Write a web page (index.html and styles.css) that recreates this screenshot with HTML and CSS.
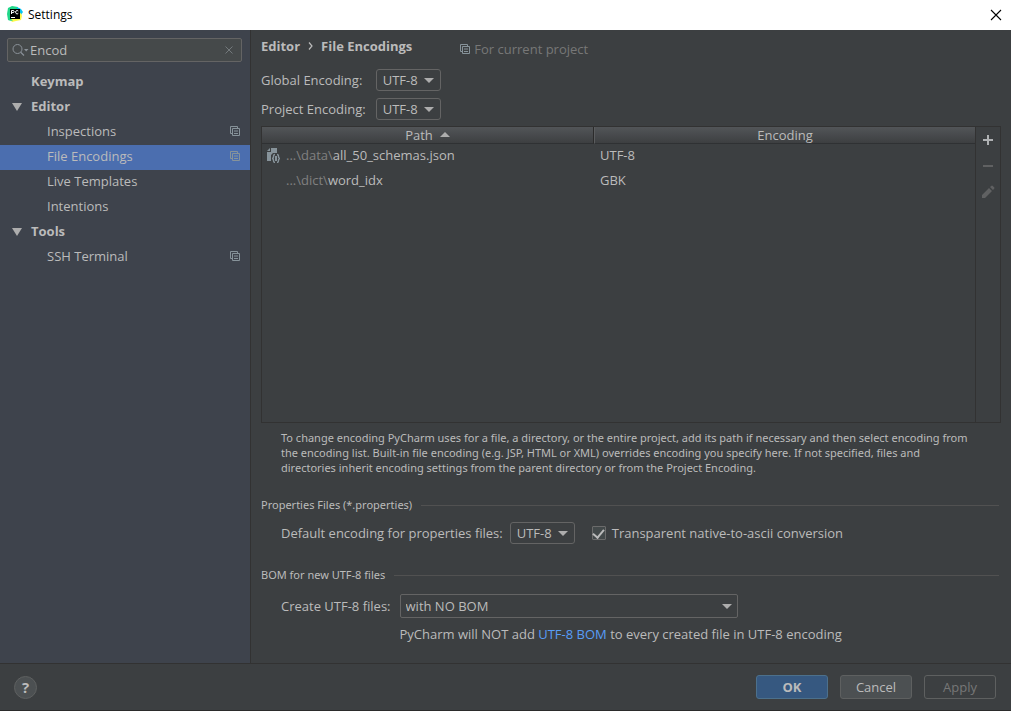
FILE: index.html
```html
<!DOCTYPE html>
<html lang="en">
<head>
<meta charset="utf-8">
<title>Settings</title>
<link rel="stylesheet" href="styles.css">
</head>
<body>
<svg class="defs" width="0" height="0" aria-hidden="true">
  <symbol id="copy" viewBox="0 0 10 10">
    <path d="M2.500 7.500H.5V.5H7.500V2.500M2.500 2.500H9.500V9.500H2.500ZM4 5H8M4 7.500H8" fill="none" stroke="currentColor"/>
  </symbol>
</svg>
<div class="window">
  <header class="titlebar">
    <svg class="logo" width="16" height="16" viewBox="0 0 16 16" aria-hidden="true">
      <path d="M1 2 5 0 11 1 9 9 6 15 1 14 0 8Z" fill="#21d789"/>
      <path d="M10 1 14 3 16 6 14 9 10 6Z" fill="#07c3f2"/>
      <path d="M14 7 15 10 14 14 9 15 5 16 3 13Z" fill="#fcf84a"/>
      <path d="M1 11 4 13 6 15 1 14Z" fill="#21d789"/>
      <rect x="3" y="3" width="10" height="10" fill="#000"/>
      <path d="M4.500 8V4.500H6Q7.200 4.500 7.200 5.500T6 6.600H4.500M11.300 5Q10 4 9 5T9 7.400 11.300 7.300M4 11.500H8" fill="none" stroke="#fff"/>
    </svg>
    <h1 class="title">Settings</h1>
    <button class="close" type="button" aria-label="Close">
      <svg width="12" height="12" viewBox="0 0 12 12"><path d="M1 1 11 11M11 1 1 11" stroke="#000" stroke-width="1.100"/></svg>
    </button>
  </header>

  <div class="content">
    <nav class="sidebar" aria-label="Settings sections">
      <div class="search">
        <svg width="17" height="14" viewBox="0 0 17 14" aria-hidden="true"><circle cx="5.500" cy="6" r="4.500" fill="none" stroke="#8b9299"/><path d="M8.700 9.300 12 12.500" stroke="#8b9299" stroke-width="1.200"/><path d="M12 6H16.500L14.200 8.500Z" fill="#8b9299"/></svg>
        <input class="search-input" type="text" value="Encod" aria-label="Search settings">
        <button class="clear" type="button" aria-label="Clear search"><svg width="8" height="8" viewBox="0 0 8 8"><path d="M.5 .5 7.500 7.500M7.500 .5 .5 7.500" stroke="#73797c"/></svg></button>
      </div>
      <ul class="tree">
        <li><a class="item group" href="#">Keymap</a></li>
        <li><a class="item group" href="#"><span class="arrow"></span>Editor</a></li>
        <li><a class="item child" href="#">Inspections<svg class="copy"><use href="#copy"/></svg></a></li>
        <li><a class="item child selected" href="#" aria-current="page">File Encodings<svg class="copy"><use href="#copy"/></svg></a></li>
        <li><a class="item child" href="#">Live Templates</a></li>
        <li><a class="item child" href="#">Intentions</a></li>
        <li><a class="item group" href="#"><span class="arrow"></span>Tools</a></li>
        <li><a class="item child" href="#">SSH Terminal<svg class="copy"><use href="#copy"/></svg></a></li>
      </ul>
    </nav>

    <main class="panel">
      <div class="heading">
        <h2 class="crumbs"><span>Editor</span><svg width="5" height="8" viewBox="0 0 5 8" aria-hidden="true"><path d="M1 .5 4 4 1 7.500" fill="none" stroke="#bbb" stroke-width="1.200"/></svg><span>File Encodings</span></h2>
        <span class="scope"><svg class="copy"><use href="#copy"/></svg>For current project</span>
      </div>
      <div class="encodings">
        <label for="global">Global Encoding:</label>
        <span class="combo"><select id="global"><option>UTF-8</option></select></span>
        <label for="project">Project Encoding:</label>
        <span class="combo"><select id="project"><option>UTF-8</option></select></span>
      </div>

      <div class="files">
        <div class="files-list">
          <table class="table">
            <thead>
              <tr><th class="col-path">Path<span class="sort"></span></th><th>Encoding</th></tr>
            </thead>
            <tbody>
              <tr>
                <td><div class="path"><svg width="14" height="16" viewBox="0 0 14 16" aria-hidden="true"><path d="M4 1H10V6H6L4 8V14H0V5H4Z" fill="#87939a"/><path d="M0 4 3 1V4Z" fill="#87939a"/><path d="M8 7.500Q6.500 7.500 6.500 9.500T5 11.500Q6.500 11.500 6.500 13.500T8 15.500M10 7.500Q11.500 7.500 11.500 9.500T13 11.500Q11.500 11.500 11.500 13.500T10 15.500" fill="none" stroke="#87939a" stroke-width="1.400"/><path d="M9 9V14" stroke="#87939a" stroke-width="2"/></svg><span><span class="dim">...\data\</span>all_50_schemas.json</span></div></td>
                <td>UTF-8</td>
              </tr>
              <tr>
                <td><div class="path no-icon"><span><span class="dim">...\dict\</span>word_idx</span></div></td>
                <td>GBK</td>
              </tr>
            </tbody>
          </table>
        </div>
        <div class="tools">
          <button class="tool" type="button" aria-label="Add"><svg width="12" height="12" viewBox="0 0 12 12"><path d="M1 6H11M6 1V11" stroke="#afb1b3" stroke-width="2"/></svg></button>
          <button class="tool" type="button" aria-label="Remove" disabled><svg width="12" height="12" viewBox="0 0 12 12"><path d="M1 6H11" stroke="#606162" stroke-width="2"/></svg></button>
          <button class="tool" type="button" aria-label="Edit" disabled><svg width="14" height="14" viewBox="0 0 14 14"><path d="M1 10 8 3 11 6 4 13H1ZM9 2 10.500 .7Q11 .3 11.500 .7L13.300 2.500Q13.700 3 13.300 3.500L12 5Z" fill="#606162"/></svg></button>
        </div>
      </div>
      <p class="note">To change encoding PyCharm uses for a file, a directory, or the entire project, add its path if necessary and then select encoding from the encoding list. Built-in file encoding (e.g. JSP, HTML or XML) overrides encoding you specify here. If not specified, files and directories inherit encoding settings from the parent directory or from the Project Encoding.</p>

      <h3 class="section">Properties Files (*.properties)</h3>
      <div class="row properties">
        <label for="props">Default encoding for properties files:</label>
        <span class="combo"><select id="props"><option>UTF-8</option></select></span>
        <label class="check"><input type="checkbox" checked>Transparent native-to-ascii conversion</label>
      </div>

      <h3 class="section">BOM for new UTF-8 files</h3>
      <div class="row bom">
        <label for="bom">Create UTF-8 files:</label>
        <span class="combo wide"><select id="bom"><option>with NO BOM</option></select></span>
        <p class="hint">PyCharm will NOT add <a class="link" href="#">UTF-8 BOM</a> to every created file in UTF-8 encoding</p>
      </div>
    </main>
  </div>

  <footer class="footer">
    <button class="help" type="button" aria-label="Help">?</button>
    <div class="actions">
      <button class="btn primary" type="button">OK</button>
      <button class="btn" type="button">Cancel</button>
      <button class="btn" type="button" disabled>Apply</button>
    </div>
  </footer>
</div>
</body>
</html>
```
FILE: styles.css
```css
* { box-sizing: border-box; }
body {
  margin: 0;
  background: #3c3f41;
  color: #bbbbbb;
  font: 13px/18px "Open Sans", "Noto Sans", sans-serif;
}
h1, h2, h3, p, ul { margin: 0; padding: 0; }
button, input, select { font: inherit; color: inherit; margin: 0; }
button { padding: 0; border: 0; background: none; }
a { color: inherit; text-decoration: none; }
svg { flex: none; }
.defs { position: absolute; }
.window { display: flex; flex-direction: column; min-height: 100vh; border-bottom: 1px solid #2b2b2b; }

.titlebar { display: flex; align-items: center; gap: 5px; height: 30px; padding: 0 9px 0 7px; background: #fff; color: #000; }
.logo { margin-bottom: 2px; }
.title { flex: 1; font-size: 12px; font-weight: 400; }
.close { display: grid; }

.content { display: flex; flex: 1; }
.sidebar { width: 251px; flex: none; padding-top: 8px; background: #3e434c; border-right: 1px solid #323232; }
.search { display: flex; align-items: center; gap: 1px; height: 24px; margin: 0 8px 8px 7px; padding: 0 8px 0 4px; background: #45494a; border: 1px solid #646464; border-radius: 2px; }
.search-input { flex: 1; min-width: 0; padding: 0; border: 0; outline: 0; background: none; }
.clear { display: grid; }
.tree { list-style: none; }
.item { display: flex; align-items: center; height: 25px; padding: 0 10px 3px 0; }
.item.group { position: relative; padding-left: 31px; font-weight: 700; }
.item.child { padding-left: 47px; }
.selected { background: #4b6eaf; }
.arrow { position: absolute; left: 12px; top: 8px; border: 5px solid transparent; border-top: 8px solid #adadad; border-bottom: 0; }
.copy { width: 10px; height: 10px; color: #87939a; }
.item .copy { margin-left: auto; }

.panel { display: flex; flex-direction: column; flex: 1; min-width: 0; padding: 7px 10px 20px; }
.heading { display: flex; gap: 48px; height: 32px; }
.crumbs { display: flex; align-items: center; gap: 8px; height: 18px; font-size: 13px; line-height: 18px; }
.scope { display: flex; align-items: center; gap: 4px; height: 24px; color: #777777; }
.encodings { display: grid; grid-template-columns: max-content max-content; align-items: center; gap: 7px 10px; margin-bottom: 6px; }
.combo { position: relative; display: inline-flex; width: 65px; }
.combo::after { content: ""; position: absolute; right: 7px; top: 9px; border: 5px solid transparent; border-top-color: #adadad; border-bottom: 0; pointer-events: none; }
.combo select { appearance: none; width: 100%; height: 22px; padding: 0 6px; border: 1px solid #646464; border-radius: 3px; background: #3c3f41; }
.combo.wide { width: 338px; }
.combo.wide select { height: 24px; padding: 0 5px; border-radius: 2px; }
.combo.wide::after { top: 10px; right: 6px; }

.files { display: flex; flex: 1; border: 1px solid #323232; }
.files-list { flex: 1; }
.table { width: 100%; border-collapse: separate; border-spacing: 0; table-layout: fixed; }
.table th { height: 17px; padding: 0; font-weight: 400; line-height: 16px; background: linear-gradient(#525558, #3d3f41); border-bottom: 1px solid #2f3133; }
.table .col-path { width: 332px; border-right: 1px solid #2b2b2b; }
.table th + th { border-left: 1px solid #5b5d5f; }
.sort { display: inline-block; margin: 0 0 3px 7px; border: 5px solid transparent; border-top: 0; border-bottom-color: #adadad; }
.table td { height: 25px; padding: 0 6px 3px 5px; }
.table td + td { padding-left: 6px; }
.path { display: flex; align-items: center; gap: 5px; }
.no-icon { padding-left: 19px; }
.dim { color: #808080; }
.tools { display: flex; flex-direction: column; width: 25px; border-left: 1px solid #323232; }
.tool { display: grid; place-items: center; height: 26px; }

.note { margin: 7px 28px 22px 20px; font-family: "Noto Sans", "Open Sans", sans-serif; font-size: 11px; line-height: 15px; }
.section { display: flex; align-items: center; gap: 9px; margin-right: 2px; font-family: "Noto Sans", "Open Sans", sans-serif; font-size: 11px; font-weight: 400; line-height: 16px; }
.section::after { content: ""; flex: 1; height: 1px; background: #515151; }
.row { padding-left: 20px; }
.properties { display: flex; align-items: center; margin: 9px 0 23px; }
.properties .combo { margin: 0 17px 0 7px; }
.check { display: flex; align-items: center; gap: 6px; }
.check input { appearance: none; display: grid; place-items: center; width: 14px; height: 14px; border: 1px solid #6b6b6b; border-radius: 1px; background: #43494a; }
.check input:checked::after { content: ""; width: 5px; height: 9px; margin-bottom: 2px; border: solid #bbbbbb; border-width: 0 2px 2px 0; transform: rotate(40deg); }
.bom { display: grid; grid-template-columns: max-content 1fr; align-items: center; gap: 7px 9px; margin-top: 11px; }
.hint { grid-column: 2; }
.link { color: #589df6; }

.footer { display: flex; align-items: center; justify-content: space-between; height: 47px; padding: 0 15px 0 14px; border-top: 1px solid #323232; }
.help { width: 23px; height: 23px; border: 1px solid #5e6060; border-radius: 50%; background: #4c5052; font-size: 15px; font-weight: 700; line-height: 20px; }
.actions { display: flex; gap: 12px; }
.btn { width: 72px; height: 24px; border: 1px solid #5e6060; border-radius: 3px; background: #4c5052; }
.btn.primary { border-color: #4c708c; background: #365880; font-weight: 700; }
.btn:disabled { background: none; color: #777777; }
```
